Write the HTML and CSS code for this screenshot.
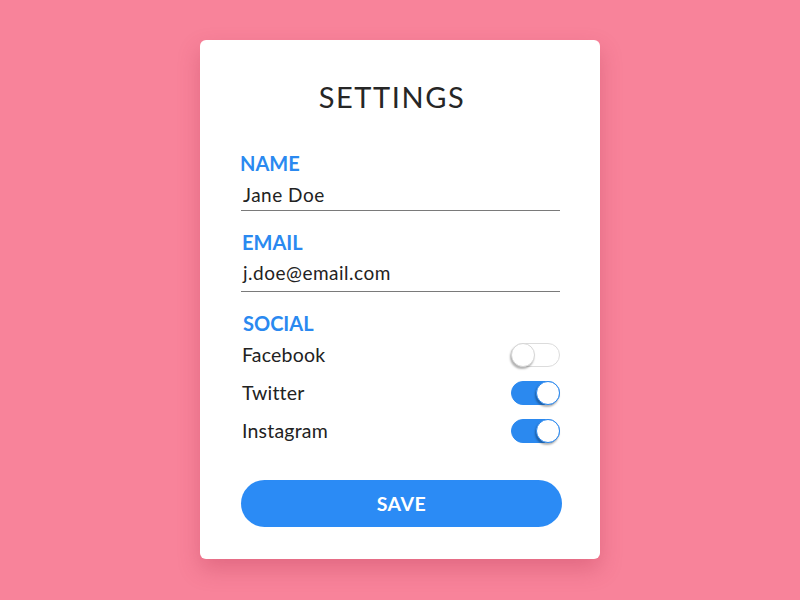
FILE: index.html
```html
<!DOCTYPE html>
<html lang="en">
<head>
<meta charset="utf-8">
<title>Settings</title>
<link rel="stylesheet" href="styles.css">
</head>
<body>
<main class="page">
  <section class="card">
    <h1 class="title">SETTINGS</h1>
    <div class="field field-name">
      <label class="label">NAME</label>
      <div class="input input-name">Jane Doe</div>
    </div>
    <div class="field field-email">
      <label class="label">EMAIL</label>
      <div class="input input-email">j.doe@email.com</div>
    </div>
    <div class="social">
      <div class="label label-social">SOCIAL</div>
      <div class="row">
        <span class="row-name">Facebook</span>
        <span class="toggle"><span class="knob"></span></span>
      </div>
      <div class="row">
        <span class="row-name">Twitter</span>
        <span class="toggle on"><span class="knob"></span></span>
      </div>
      <div class="row">
        <span class="row-name">Instagram</span>
        <span class="toggle on"><span class="knob"></span></span>
      </div>
    </div>
    <button class="save">SAVE</button>
  </section>
</main>
</body>
</html>
```
FILE: styles.css
```css
* { box-sizing: border-box; }
html, body {
  margin: 0;
  padding: 0;
  height: 100%;
}
body {
  background: #f8839a;
  font-family: Lato, "Open Sans", sans-serif;
  color: #222;
}
.page {
  display: flex;
  justify-content: center;
  padding-top: 40px;
}
.card {
  width: 400px;
  height: 519px;
  background: #fff;
  border-radius: 6px;
  padding: 40px 40px 0 40px;
  box-shadow: 0 10px 22px rgba(170, 40, 70, 0.28);
}
.title {
  margin: 0;
  font-size: 29px;
  line-height: 34px;
  font-weight: 400;
  letter-spacing: 1.6px;
  text-align: center;
  padding-right: 16px;
  color: #262626;
}
.field-name { margin-top: 37px; }
.field-email { margin-top: 19px; }
.label {
  display: block;
  font-size: 20px;
  line-height: 24px;
  font-weight: 700;
  color: #2a89f0;
}
.field-email .label { padding-left: 2px; }
.input {
  margin-top: 7px;
  padding-left: 2px;
  font-size: 19px;
  line-height: 26px;
  letter-spacing: 0.5px;
  color: #222;
  border-bottom: 1px solid #7a7a7a;
  margin-left: 1px;
}
.input-name { padding-bottom: 2px; }
.input-email { margin-top: 6px; padding-bottom: 5px; }
.social { margin-top: 19px; }
.label-social { padding-left: 3px; }
.row {
  display: flex;
  align-items: center;
  justify-content: space-between;
  height: 38px;
}
.label-social + .row { margin-top: 1px; }
.row-name {
  font-size: 19.5px;
  line-height: 38px;
  letter-spacing: 0.2px;
  padding-left: 2px;
}
.toggle {
  position: relative;
  width: 49px;
  height: 24px;
  border-radius: 12px;
  background: #fff;
  border: 1px solid #dcdcdc;
}
.toggle .knob {
  position: absolute;
  top: -1px;
  left: -1px;
  width: 24px;
  height: 24px;
  border-radius: 50%;
  background: #fff;
  border: 1px solid #d6d6d6;
  box-shadow: -1px 2px 2px rgba(0, 0, 0, 0.3);
}
.toggle.on {
  background: #2b89ef;
  border-color: #2b89ef;
}
.toggle.on .knob {
  left: auto;
  right: -1px;
  border-color: #2b89ef;
}
.save {
  display: block;
  width: 321px;
  height: 47px;
  margin: 30px 0 0 1px;
  border: none;
  border-radius: 24px;
  background: #2b8bf5;
  color: #fff;
  font-family: Lato, "Open Sans", sans-serif;
  font-size: 19.5px;
  font-weight: 700;
  letter-spacing: 0.5px;
  cursor: pointer;
}
```
